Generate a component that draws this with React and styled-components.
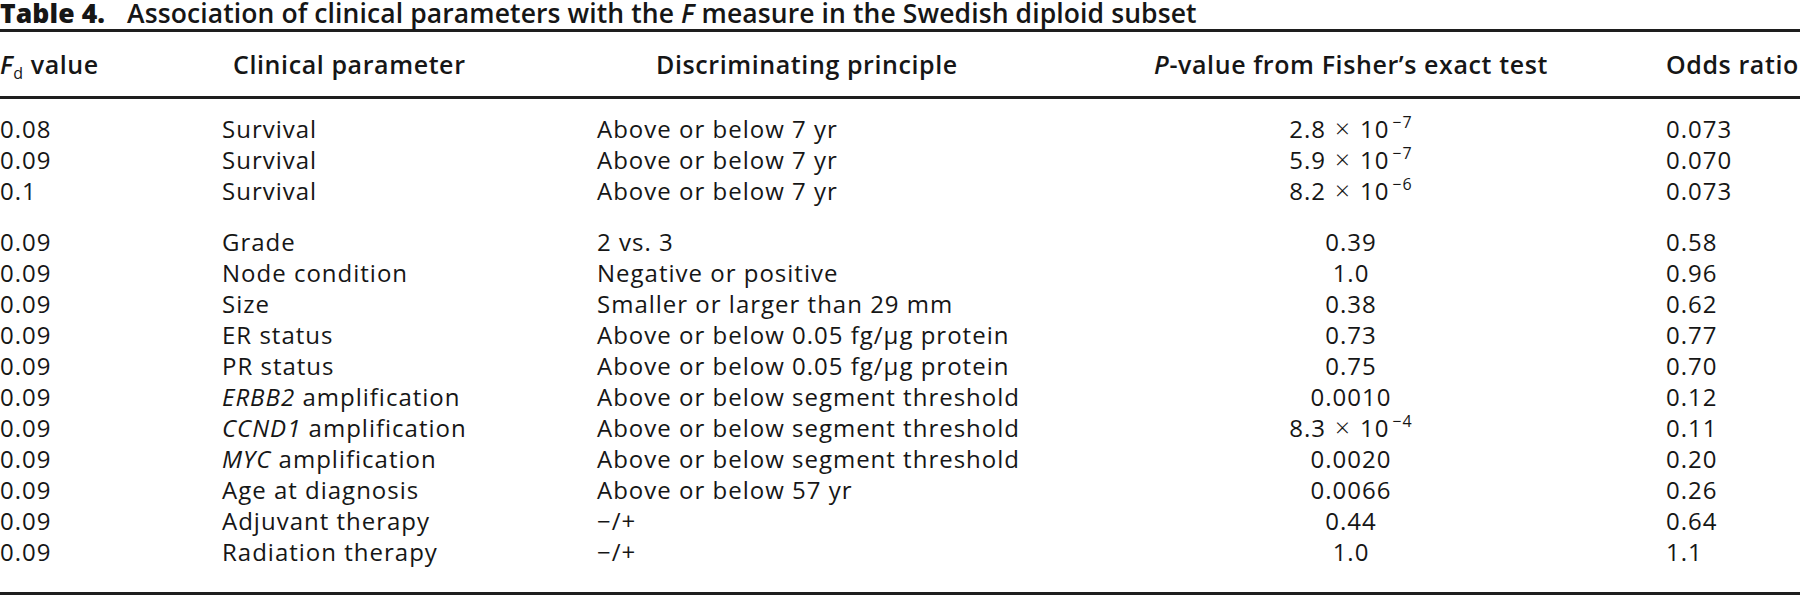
import styled, { createGlobalStyle } from 'styled-components';

const GlobalStyle = createGlobalStyle`
  html, body {
    margin: 0;
    padding: 0;
    background: #ffffff;
    overflow: hidden;
  }
  body {
    font-family: 'Open Sans', 'Liberation Sans', sans-serif;
    color: #161616;
  }
`;

const Page = styled.div`
  width: 1800px;
  height: 595px;
  overflow: hidden;
`;

const Caption = styled.h1`
  margin: 0;
  font-size: 26.5px;
  line-height: 26px;
  font-weight: 600;
  white-space: nowrap;
  letter-spacing: 0.1px;
`;

const CaptionLabel = styled.span`
  font-weight: 800;
  margin-right: 22px;
`;

const Table = styled.div`
  margin-top: 3px;
  border-top: 3px solid #1e1e1e;
  border-bottom: 4px solid #1e1e1e;
`;

const Row = styled.div`
  display: grid;
  grid-template-columns: 222px 375px 439px 630px 1fr;
  white-space: nowrap;
`;

const HeadRow = styled(Row)`
  padding: 16px 0 15px;
  border-bottom: 3px solid #1e1e1e;
  font-size: 25px;
  line-height: 33px;
  font-weight: 600;
  letter-spacing: 0.6px;
`;

const Body = styled.div`
  padding: 14px 0 25px;
  font-size: 24px;
  line-height: 31px;
  letter-spacing: 1px;
`;

const Spacer = styled.div`
  height: 20px;
`;

const Cell = styled.div`
  text-align: ${(p) => (p.$center ? 'center' : 'left')};
  padding-left: ${(p) => p.$indent || 0}px;
`;

const Em = styled.i`
  font-style: italic;
`;

const Sub = styled.sub`
  font-size: 16px;
  font-weight: 400;
  vertical-align: -5px;
  line-height: 0;
`;

const Sup = styled.sup`
  display: inline-block;
  margin-left: 3px;
  font-size: 16px;
  vertical-align: 10px;
  line-height: 16px;
`;

const Times = styled.span`
  display: inline-block;
  margin: 0 9px;
  font-size: 26px;
  line-height: 24px;
  font-weight: 300;
`;

const Sci = ({ m, e }) => (
  <>
    {m}
    <Times>×</Times>
    10<Sup>−{e}</Sup>
  </>
);

const groups = [
  [
    ['0.08', 'Survival', 'Above or below 7 yr', <Sci m="2.8" e="7" />, '0.073'],
    ['0.09', 'Survival', 'Above or below 7 yr', <Sci m="5.9" e="7" />, '0.070'],
    ['0.1', 'Survival', 'Above or below 7 yr', <Sci m="8.2" e="6" />, '0.073'],
  ],
  [
    ['0.09', 'Grade', '2 vs. 3', '0.39', '0.58'],
    ['0.09', 'Node condition', 'Negative or positive', '1.0', '0.96'],
    ['0.09', 'Size', 'Smaller or larger than 29 mm', '0.38', '0.62'],
    ['0.09', 'ER status', 'Above or below 0.05 fg/μg protein', '0.73', '0.77'],
    ['0.09', 'PR status', 'Above or below 0.05 fg/μg protein', '0.75', '0.70'],
    ['0.09', <><Em>ERBB2</Em> amplification</>, 'Above or below segment threshold', '0.0010', '0.12'],
    ['0.09', <><Em>CCND1</Em> amplification</>, 'Above or below segment threshold', <Sci m="8.3" e="4" />, '0.11'],
    ['0.09', <><Em>MYC</Em> amplification</>, 'Above or below segment threshold', '0.0020', '0.20'],
    ['0.09', 'Age at diagnosis', 'Above or below 57 yr', '0.0066', '0.26'],
    ['0.09', 'Adjuvant therapy', '−/+', '0.44', '0.64'],
    ['0.09', 'Radiation therapy', '−/+', '1.0', '1.1'],
  ],
];

const DataRow = ({ cells }) => (
  <Row>
    <Cell>{cells[0]}</Cell>
    <Cell>{cells[1]}</Cell>
    <Cell>{cells[2]}</Cell>
    <Cell $center>{cells[3]}</Cell>
    <Cell>{cells[4]}</Cell>
  </Row>
);

const App = () => (
  <Page>
    <GlobalStyle />
    <Caption>
      <CaptionLabel>Table 4.</CaptionLabel>
      Association of clinical parameters with the <Em>F</Em> measure in the Swedish diploid subset
    </Caption>
    <Table>
      <HeadRow>
        <Cell>
          <Em>F</Em>
          <Sub>d</Sub> value
        </Cell>
        <Cell $indent={11}>Clinical parameter</Cell>
        <Cell $indent={59}>Discriminating principle</Cell>
        <Cell $center>
          <Em>P</Em>-value from Fisher’s exact test
        </Cell>
        <Cell $indent={0}>Odds ratio</Cell>
      </HeadRow>
      <Body>
        {groups.map((rows, gi) => (
          <div key={gi}>
            {gi > 0 && <Spacer />}
            {rows.map((cells, ri) => (
              <DataRow key={ri} cells={cells} />
            ))}
          </div>
        ))}
      </Body>
    </Table>
  </Page>
);

export default App;
